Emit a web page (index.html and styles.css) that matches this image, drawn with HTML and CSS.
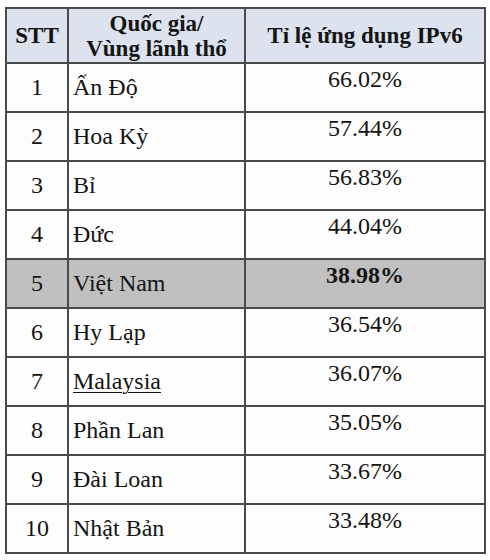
FILE: index.html
```html
<!DOCTYPE html>
<html lang="vi">
<head>
<meta charset="utf-8">
<link rel="stylesheet" href="styles.css">
</head>
<body>
<table class="ipv6">
  <thead>
    <tr>
      <th class="c-stt">STT</th>
      <th class="c-name">Quốc gia/<br>Vùng lãnh thổ</th>
      <th class="c-pct">Tỉ lệ ứng dụng IPv6</th>
    </tr>
  </thead>
  <tbody>
    <tr><td class="c-stt">1</td><td class="c-name">Ấn Độ</td><td class="c-pct">66.02%</td></tr>
    <tr><td class="c-stt">2</td><td class="c-name">Hoa Kỳ</td><td class="c-pct">57.44%</td></tr>
    <tr><td class="c-stt">3</td><td class="c-name">Bỉ</td><td class="c-pct">56.83%</td></tr>
    <tr><td class="c-stt">4</td><td class="c-name">Đức</td><td class="c-pct">44.04%</td></tr>
    <tr class="hl"><td class="c-stt">5</td><td class="c-name">Việt Nam</td><td class="c-pct strong">38.98%</td></tr>
    <tr><td class="c-stt">6</td><td class="c-name">Hy Lạp</td><td class="c-pct">36.54%</td></tr>
    <tr><td class="c-stt">7</td><td class="c-name"><span class="ul">Malaysia</span></td><td class="c-pct">36.07%</td></tr>
    <tr><td class="c-stt">8</td><td class="c-name">Phần Lan</td><td class="c-pct">35.05%</td></tr>
    <tr><td class="c-stt">9</td><td class="c-name">Đài Loan</td><td class="c-pct">33.67%</td></tr>
    <tr><td class="c-stt">10</td><td class="c-name">Nhật Bản</td><td class="c-pct">33.48%</td></tr>
  </tbody>
</table>
</body>
</html>
```

FILE: styles.css
```css
html, body {
  margin: 0;
  padding: 0;
  background: #ffffff;
}
body {
  padding: 7px 0 0 5px;
  font-family: "Liberation Serif", "Times New Roman", serif;
  color: #141414;
}
.ipv6 {
  border-collapse: collapse;
  width: 481px;
  table-layout: fixed;
  border: 2px solid #4a4a4a;
}
.ipv6 th, .ipv6 td {
  border: 2px solid #4a4a4a;
  padding: 0;
}
.ipv6 th {
  background: #dce2ee;
  font-weight: bold;
  font-size: 23px;
  line-height: 25px;
  height: 53px;
  text-align: center;
  vertical-align: middle;
}
.ipv6 td {
  font-size: 24px;
  line-height: 27px;
  height: 47px;
  background: #fdfdfd;
}
.c-stt { width: 60px; text-align: center; vertical-align: middle; }
.c-name { width: 175px; }
td.c-name { text-align: left; padding-left: 4px; vertical-align: middle; }
.ipv6 td.c-pct { text-align: center; vertical-align: top; padding-top: 2px; height: 45px; }
.ipv6 tr.hl td { background: #c0c0c0; }
.strong { font-weight: bold; }
.ul { text-decoration: underline; text-underline-offset: 3px; text-decoration-thickness: 1px; }
```
